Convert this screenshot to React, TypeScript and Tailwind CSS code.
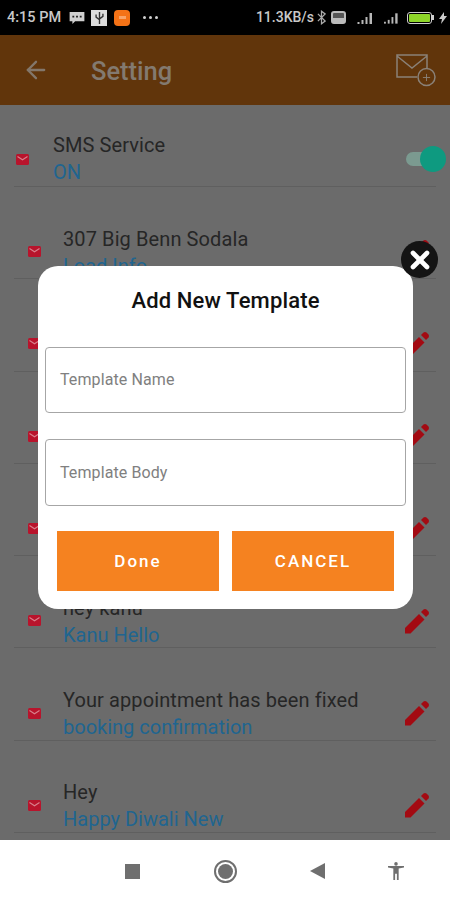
import { ArrowLeft, Plus, X } from 'lucide-react';

// the middle rows are hidden behind the dialog, only the last rows can be read
const rows = [
  { title: '307 Big Benn Sodala', sub: 'Load Info' },
  { title: 'Template', sub: 'Info' },
  { title: 'Template', sub: 'Info' },
  { title: 'Template', sub: 'Info' },
  { title: 'hey kanu', sub: 'Kanu Hello' },
  { title: 'Your appointment has been fixed', sub: 'booking confirmation' },
  { title: 'Hey', sub: 'Happy Diwali New' },
];

function MailIcon({ className }: { className: string }) {
  return (
    <svg viewBox="0 0 13 11" className={className}>
      <rect width="13" height="11" rx="1.5" fill="#b8142c" />
      <path d="M1.5 2.5 L6.500 5.800 L11.500 2.500" fill="none" stroke="#d8808c" strokeWidth="1.1" />
    </svg>
  );
}

function PencilIcon() {
  return (
    <svg viewBox="0 0 26 26" className="mb-[2px] h-[26px] w-[26px] shrink-0" fill="#a30a12">
      <path d="M1 20 L15 6 L20.500 11.500 L6.500 25.500 L1 25.500 Z" />
      <path d="M17 4 L19.500 1.500 Q21 0.500 22.500 1.500 L24.500 3.500 Q25.500 5 24.500 6.500 L22 9 Z" />
    </svg>
  );
}

function Signal({ className }: { className: string }) {
  return (
    <svg viewBox="0 0 16 12" className={className} fill="#b8b8b8">
      <rect x="0" y="10" width="2" height="2" />
      <rect x="4" y="8" width="2" height="4" />
      <rect x="8" y="5" width="2" height="7" />
      <rect x="12" y="1" width="2.500" height="11" />
    </svg>
  );
}

function StatusBar() {
  return (
    <div className="flex h-[35px] shrink-0 items-center justify-between bg-black pl-[7px] pr-[3px] font-medium text-[#c8c8c8]">
      <div className="flex items-center">
        <span className="w-[55px] whitespace-nowrap text-[14.500px]">4:15 PM</span>
        <svg viewBox="0 0 16 13" className="ml-[7px] h-[12px] w-4" fill="#cfcfcf">
          <path d="M0 0h16v10H6l-3 3v-3H0z" />
          <path d="M3 4h2v2H3zM7 4h2v2H7zM11 4h2v2h-2z" fill="#222" />
        </svg>
        <div className="ml-[6px] flex h-4 w-4 items-center justify-center bg-[#dcdcdc]">
          <svg viewBox="0 0 10 14" className="h-3 w-[9px]" fill="none" stroke="#333" strokeWidth="1.6">
            <path d="M5 0v14M1 3v3l4 3M9 2v3L5 8" />
          </svg>
        </div>
        <div className="ml-[7px] flex h-4 w-4 items-center justify-center rounded-[4px] bg-[#f47216]">
          <div className="h-[3px] w-[7px] bg-[#f8a468]" />
        </div>
        <div className="ml-[13px] flex gap-[3px]">
          <div className="h-[3px] w-[3px] rounded-full bg-[#d0d0d0]" />
          <div className="h-[3px] w-[3px] rounded-full bg-[#d0d0d0]" />
          <div className="h-[3px] w-[3px] rounded-full bg-[#d0d0d0]" />
        </div>
      </div>
      <div className="flex items-center text-[14px]">
        <span className="whitespace-nowrap">11.3KB/s</span>
        <svg viewBox="0 0 10 16" className="ml-[3px] h-[15px] w-[9px]" fill="none" stroke="#aaa" strokeWidth="1.400">
          <path d="M1 4l8 8-4 3V1l4 3-8 8" />
        </svg>
        <div className="ml-[5px] flex h-[13px] w-[15px] flex-col justify-end rounded-[3px] border-2 border-[#bbb] bg-[#555]">
          <div className="h-[4px] bg-[#bbb]" />
        </div>
        <Signal className="ml-[9px] h-3 w-[21px]" />
        <Signal className="ml-[8px] h-3 w-[15px]" />
        <div className="ml-[8px] flex h-3 w-[25px] items-center rounded-[3px] border-[1.5px] border-[#cfcfcf] p-px">
          <div className="h-full w-full rounded-[1px] bg-[#8ed629]" />
        </div>
        <div className="h-[5px] w-[2px] bg-[#cfcfcf]" />
        <svg viewBox="0 0 8 12" className="ml-[5px] h-3 w-2" fill="#ccc">
          <path d="M5 0L0 7h3l-1 5 6-8H5z" />
        </svg>
      </div>
    </div>
  );
}

function Row({ title, sub }: { title: string; sub: string }) {
  return (
    <div className="flex h-[92.3px] items-center border-b border-[#5f5f5f] pl-[14px] pr-[6px] pt-[40px]">
      <MailIcon className="mb-[2px] mr-[22px] h-[11px] w-[13px] shrink-0" />
      <div className="min-w-0 flex-1">
        <div className="whitespace-nowrap text-[20px] leading-[26px] tracking-[0.1px] text-[#262626]">{title}</div>
        <div className="whitespace-nowrap text-[20px] leading-[28px] text-[#206590]">{sub}</div>
      </div>
      <PencilIcon />
    </div>
  );
}

export default function App() {
  return (
    <div className="relative flex h-[900px] w-[450px] flex-col overflow-hidden bg-white font-['Roboto',sans-serif]">
      <StatusBar />
      <div className="flex h-[70px] shrink-0 items-center bg-[#61350b] pl-[22px] pr-[14px]">
        <ArrowLeft className="h-7 w-7 text-[#83776b]" strokeWidth={2} />
        <div className="ml-[41px] flex-1 pt-[2px] text-[25.500px] font-medium text-[#837a70]">Setting</div>
        <div className="relative h-[34px] w-[40px]">
          <svg viewBox="0 0 40 34" className="h-full w-full" fill="none" stroke="#8a8178" strokeWidth="1.500">
            <path d="M21 24H1V2h30v13M1 3l15 12L31 3" />
            <circle cx="30.500" cy="24" r="8.500" />
          </svg>
          <Plus className="absolute left-[25px] top-[19px] h-[11px] w-[11px] text-[#8a8178]" strokeWidth={2} />
        </div>
      </div>
      <div className="flex-1 overflow-hidden bg-[#6b6b6b] px-[14px]">
        <div className="flex h-[82px] items-center border-b border-[#5f5f5f] pt-[27px]">
          <MailIcon className="ml-[2px] mr-[24px] h-[11px] w-[13px] shrink-0" />
          <div className="flex-1">
            <div className="text-[20px] leading-[26px] tracking-[0.1px] text-[#262626]">SMS Service</div>
            <div className="text-[20px] leading-[28px] text-[#206590]">ON</div>
          </div>
          <div className="relative -mr-[2px] h-[14px] w-[32px] rounded-full bg-[#7b9a90]">
            <div className="absolute -right-[8px] -top-[6px] h-[26px] w-[26px] rounded-full bg-[#0e9a80]" />
          </div>
        </div>
        {rows.map((r, i) => (
          <Row key={i} title={r.title} sub={r.sub} />
        ))}
      </div>
      <div className="flex h-[60px] shrink-0 items-center bg-white pt-[2px]">
        <div className="ml-[125px] h-[15px] w-[15px] bg-[#6f6f6f]" />
        <div className="ml-[74px] flex h-[23px] w-[23px] items-center justify-center rounded-full border-2 border-[#6f6f6f]">
          <div className="h-[15px] w-[15px] rounded-full bg-[#6f6f6f]" />
        </div>
        <svg viewBox="0 0 15 16" className="ml-[73px] h-4 w-[15px]" fill="#6f6f6f">
          <path d="M15 0v16L0 8z" />
        </svg>
        <svg viewBox="0 0 18 20" className="ml-[63px] h-5 w-4" fill="#6f6f6f">
          <circle cx="9" cy="2" r="2" />
          <path d="M0 4.500h18v1.600l-6 1V20h-2v-7H8v7H6V7.100l-6-1z" />
        </svg>
      </div>

      {/* dialog */}
      <div className="absolute left-[38px] top-[266px] flex h-[343px] w-[375px] flex-col rounded-[20px] bg-white px-[7px]">
        <div className="mt-[21px] text-center text-[22px] font-medium leading-[28px] tracking-[0.15px] text-[#111]">Add New Template</div>
        <div className="mt-[32px] flex h-[66px] items-center rounded-[4px] border-[1.5px] border-[#a6a6a6] px-[14px] text-[16px] tracking-[0.1px] text-[#808080]">
          Template Name
        </div>
        <div className="mt-[26px] flex h-[67px] items-center rounded-[4px] border-[1.5px] border-[#a6a6a6] px-[14px] text-[16px] tracking-[0.1px] text-[#808080]">
          Template Body
        </div>
        <div className="mt-[25px] flex gap-[13px] px-[12px]">
          <div className="flex h-[60px] flex-1 items-center justify-center bg-[#f58220] pt-[2px] text-[17px] font-medium tracking-[2px] text-white">Done</div>
          <div className="flex h-[60px] flex-1 items-center justify-center bg-[#f58220] pt-[2px] text-[17px] font-medium tracking-[2px] text-white">CANCEL</div>
        </div>
      </div>
      <div className="absolute left-[401px] top-[241px] flex h-[37px] w-[37px] items-center justify-center rounded-full bg-[#141414]">
        <X className="h-7 w-7 text-white" strokeWidth={4} />
      </div>
    </div>
  );
}
